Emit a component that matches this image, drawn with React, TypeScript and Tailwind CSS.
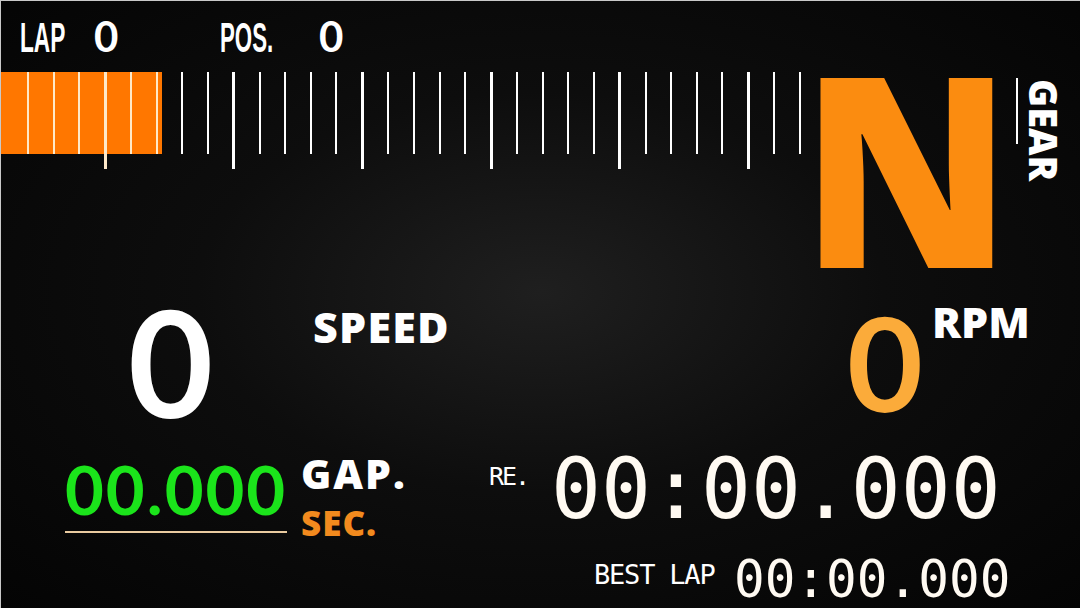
const TICKS = Array.from({ length: 31 }, (_, i) => i);

function RevBar() {
  return (
    <div className="h-[97px] w-[800px] bg-[linear-gradient(#ff7700,#ff7700)] bg-[length:161px_82px] bg-no-repeat">
      <div className="flex h-full items-start justify-between pl-[26px]">
        {TICKS.map((i) => {
          const tall = i % 5 === 3;
          const lit = 27 + i * 25.67 < 161;
          return (
            <div
              key={i}
              className={
                (tall ? "h-[97px] w-[3px] " : "h-[82px] w-[2px] ") +
                (lit ? "bg-[#ffe9c8]" : "bg-white")
              }
            />
          );
        })}
      </div>
    </div>
  );
}

export default function App() {
  return (
    <div className="flex h-[608px] w-[1080px] flex-col overflow-hidden border-l border-t border-[#c9c9c9] bg-[radial-gradient(ellipse_at_50%_48%,#1f1f1f_0%,#0d0d0d_45%,#040404_100%)] font-['Lato',sans-serif] text-white">
      {/* top: lap / pos, rev bar, gear */}
      <div className="flex h-[287px]">
        <div className="flex w-[800px] flex-col">
          <div className="flex h-[71px] items-baseline pl-[19px] pt-[14px] leading-none">
            <div className="w-[74px] font-['Liberation_Sans',sans-serif] text-[42px] font-bold">
              <span className="inline-block origin-left scale-x-[0.54]">LAP</span>
            </div>
            <div className="w-[126px] text-[42px] font-bold">0</div>
            <div className="w-[99px] font-['Liberation_Sans',sans-serif] text-[42px] font-bold">
              <span className="inline-block origin-left scale-x-[0.53]">POS.</span>
            </div>
            <div className="text-[42px] font-bold">0</div>
          </div>
          <RevBar />
        </div>
        <div className="flex flex-1 items-start font-['Open_Sans',sans-serif] font-extrabold">
          <div className="mt-[61px] w-[215px] text-[266px] leading-[0.78] text-[#fb8c10]">
            <span className="inline-block origin-left scale-x-[0.95]">N</span>
          </div>
          <div className="mt-[77px] h-[66px] w-[2px] bg-white" />
          <div className="ml-[7px] mt-[78px] text-[38px] leading-none [writing-mode:vertical-rl]">GEAR</div>
        </div>
      </div>

      {/* speed + rpm */}
      <div className="flex h-[160px] items-start leading-none">
        <div className="ml-[127px] w-[185px] text-[147px] font-bold">0</div>
        <div className="mt-[17px] w-[534px] font-['Open_Sans',sans-serif] text-[43px] font-extrabold tracking-[1.2px]">SPEED</div>
        <div className="mt-[8px] w-[85px] text-[131px] font-bold text-[#fbab3a]">0</div>
        <div className="mt-[12px] font-['Open_Sans',sans-serif] text-[43px] font-extrabold">RPM</div>
      </div>

      {/* gap + timers */}
      <div className="flex flex-1 items-start leading-none">
        <div className="ml-[64px] mt-[8px] flex w-[224px] flex-col">
          <div className="text-[67px] font-bold tracking-[2px] text-[#1be41b]">00.000</div>
          <div className="mt-[8px] h-[2px] w-[222px] bg-[#eacba0]" />
        </div>
        <div className="ml-[12px] mt-[5px] flex w-[188px] flex-col font-['Open_Sans',sans-serif] font-extrabold">
          <div className="text-[41px] tracking-[2px]">GAP.</div>
          <div className="mt-[11px] text-[35px] tracking-[1px] text-[#f28a1e]">SEC.</div>
        </div>
        <div className="flex flex-col font-['DejaVu_Sans_Mono',monospace]">
          <div className="flex items-start">
            <div className="mt-[16px] w-[62px] text-[25px] tracking-[-2px]">RE.</div>
            <div className="text-[83px] text-[#fffaf2]">00:00.000</div>
          </div>
          <div className="mt-[23px] flex items-start">
            <div className="ml-[105px] mt-[7px] w-[140px] text-[27px] tracking-[-1.2px]">BEST LAP</div>
            <div className="text-[51px] text-[#fffaf2]">00:00.000</div>
          </div>
        </div>
      </div>
    </div>
  );
}
